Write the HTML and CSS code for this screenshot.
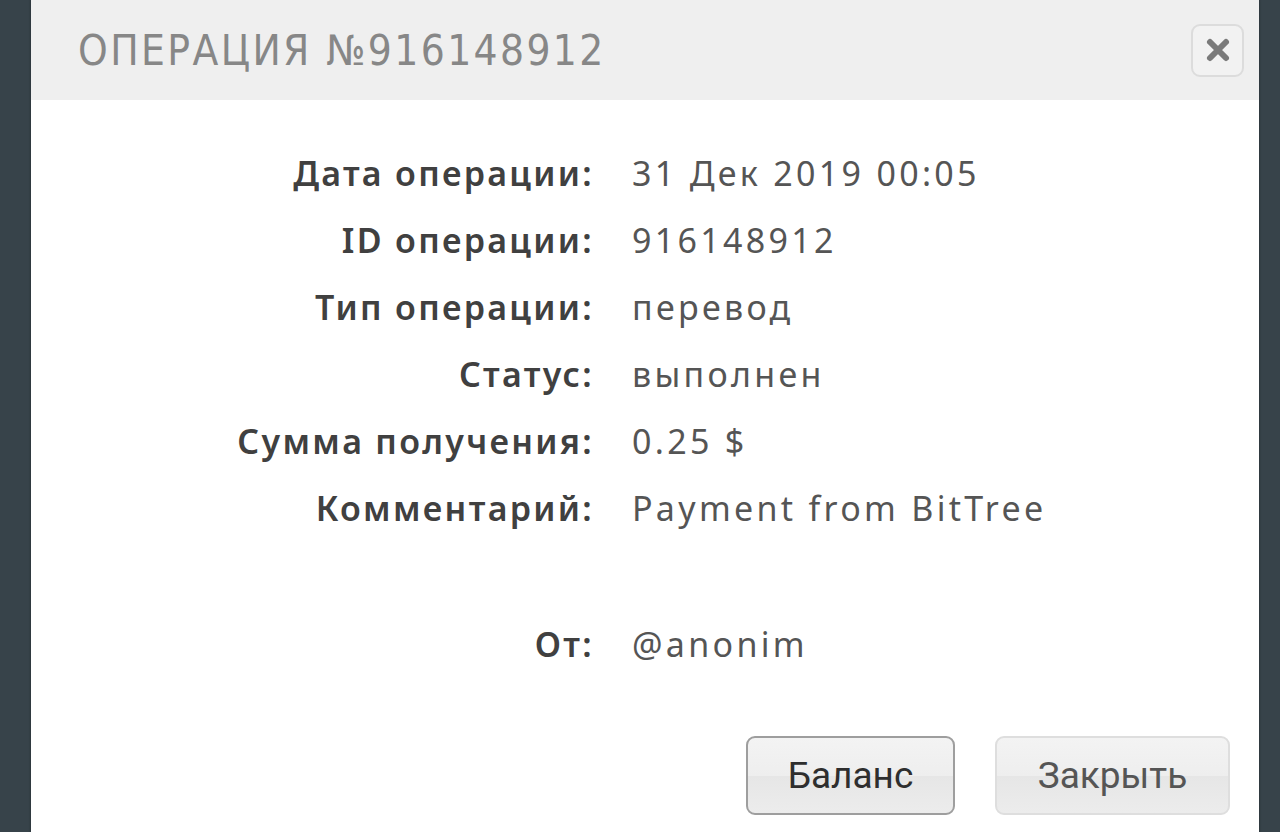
FILE: index.html
```html
<!DOCTYPE html>
<html lang="ru">
<head>
  <meta charset="UTF-8">
  <title>Операция №916148912</title>
  <link rel="stylesheet" href="styles.css">
</head>
<body>
  <div class="modal">
    <div class="modal-header">
      <h2 class="modal-title">Операция №916148912</h2>
      <button class="close-btn" title="Закрыть">
        <svg width="26" height="26" viewBox="0 0 26 26">
          <path d="M5 5 L21 21 M21 5 L5 21" stroke="#7a7a7a" stroke-width="6" stroke-linecap="round"/>
        </svg>
      </button>
    </div>
    <div class="modal-body">
      <dl class="details">
        <dt>Дата операции:</dt><dd>31 Дек 2019 00:05</dd>
        <dt>ID операции:</dt><dd>916148912</dd>
        <dt>Тип операции:</dt><dd>перевод</dd>
        <dt>Статус:</dt><dd>выполнен</dd>
        <dt>Сумма получения:</dt><dd>0.25 $</dd>
        <dt>Комментарий:</dt><dd>Payment from BitTree</dd>
        <dt class="spacer"></dt><dd class="spacer"></dd>
        <dt>От:</dt><dd>@anonim</dd>
      </dl>
    </div>
    <div class="modal-footer">
      <button class="btn btn-primary">Баланс</button>
      <button class="btn">Закрыть</button>
    </div>
  </div>
</body>
</html>
```

FILE: styles.css
```css
body {
  margin: 0;
  background: #37434a;
  font-family: "Noto Sans", sans-serif;
  overflow: hidden;
}
.modal {
  margin: -6px 0 0 31px;
  width: 1228px;
  height: 860px;
  background: #fff;
  border-radius: 6px;
  box-shadow: 0 0 3px rgba(0,0,0,0.4);
}
.modal-header {
  height: 106px;
  box-sizing: border-box;
  padding: 6px 15px 0 47px;
  background: #efefef;
  border-radius: 6px 6px 0 0;
  display: flex;
  align-items: center;
  justify-content: space-between;
}
.modal-title {
  margin: 0;
  font-family: "DejaVu Sans Condensed", "DejaVu Sans", sans-serif;
  font-stretch: condensed;
  font-weight: normal;
  font-size: 42px;
  letter-spacing: 2.4px;
  text-transform: uppercase;
  color: #878787;
}
.close-btn {
  width: 53px;
  height: 53px;
  padding: 0;
  border: 2px solid #dcdcdc;
  border-radius: 9px;
  background: #f2f2f2;
  display: flex;
  align-items: center;
  justify-content: center;
}
.modal-body {
  padding: 40px 0 0 0;
}
.details {
  margin: 0;
  display: grid;
  grid-template-columns: 563px 1fr;
  column-gap: 38px;
  font-size: 34px;
  line-height: 67px;
}
.details dt {
  text-align: right;
  font-weight: 600;
  letter-spacing: 2.3px;
  color: #404040;
}
.details dd {
  margin: 0;
  letter-spacing: 3.3px;
  color: #555;
}
.details .spacer {
  height: 69px;
}
.modal-footer {
  display: flex;
  justify-content: flex-end;
  gap: 40px;
  padding: 58px 29px 0 0;
}
.btn {
  box-sizing: border-box;
  width: 235px;
  height: 79px;
  font-family: Roboto, sans-serif;
  font-size: 37px;
  color: #555;
  border: 2px solid #dedede;
  border-radius: 9px;
  background: linear-gradient(#f3f3f3 0%, #eeeeee 50%, #e6e6e6 51%, #ececec 100%);
}
.btn-primary {
  width: 209px;
  color: #2e2e2e;
  border-color: #9e9e9e;
}
```
